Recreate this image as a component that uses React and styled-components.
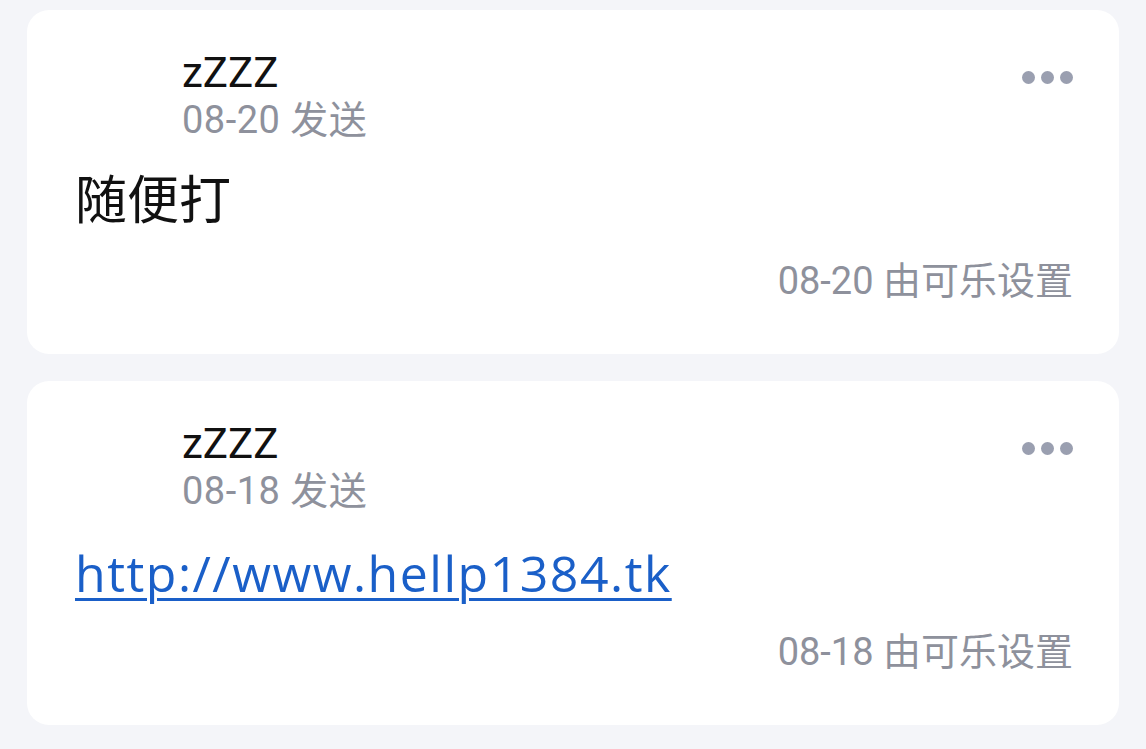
import React from "react"
import styled, { createGlobalStyle } from "styled-components"

const GlobalStyle = createGlobalStyle`
    html, body {
        margin: 0;
        padding: 0;
        background: #f4f5f9;
    }

    body {
        font-family: Roboto, "Noto Sans CJK SC", sans-serif;
    }
`

const Page = styled.div`
    display: flex;
    flex-direction: column;
    gap: 27px;
    padding: 10px 27px 23px 27px;
`

const Card = styled.div`
    background: #ffffff;
    border-radius: 22px;
    padding: 38px 46px 51px 48px;
    display: flex;
    flex-direction: column;
    height: 344px;
    box-sizing: border-box;
`

const Header = styled.div`
    display: flex;
    justify-content: space-between;
    align-items: flex-start;
`

const Author = styled.div`
    display: flex;
    flex-direction: column;
    padding-left: 107px;
`

const Name = styled.div`
    font-size: 42px;
    line-height: 50px;
    color: #111111;
`

const Sent = styled.div`
    font-size: 38px;
    line-height: 44px;
    letter-spacing: 0.5px;
    color: #8e919c;
`

const Dots = styled.div`
    display: flex;
    gap: 6px;
    margin-top: 23px;
`

const Dot = styled.span`
    width: 13px;
    height: 13px;
    border-radius: 50%;
    background: #9a9fb0;
`

const Body = styled.div`
    margin-top: 30px;
    font-size: 52px;
    line-height: 60px;
    color: #111111;
`

const Link = styled.a`
    font-family: "Open Sans", sans-serif;
    font-size: 50px;
    letter-spacing: 1.5px;
    color: #1a5fc8;
    text-decoration: underline;
    text-decoration-thickness: 3px;
    text-underline-offset: 6px;
`

const Footer = styled.div`
    margin-top: auto;
    align-self: flex-end;
    font-size: 38px;
    line-height: 44px;
    color: #8e919c;
`

const messages = [
    { name: "zZZZ", sent: "08-20", text: "随便打" },
    { name: "zZZZ", sent: "08-18", link: "http://www.hellp1384.tk" },
]

function Message({ msg }) {
    return (
        <Card>
            <Header>
                <Author>
                    <Name>{msg.name}</Name>
                    <Sent>{msg.sent} 发送</Sent>
                </Author>
                <Dots>
                    <Dot />
                    <Dot />
                    <Dot />
                </Dots>
            </Header>

            <Body>
                {msg.link ? <Link href="#">{msg.link}</Link> : msg.text}
            </Body>

            <Footer>{msg.sent} 由可乐设置</Footer>
        </Card>
    )
}

export default function App() {
    return (
        <>
            <GlobalStyle />
            <Page>
                {messages.map((m, i) => (
                    <Message key={i} msg={m} />
                ))}
            </Page>
        </>
    )
}
